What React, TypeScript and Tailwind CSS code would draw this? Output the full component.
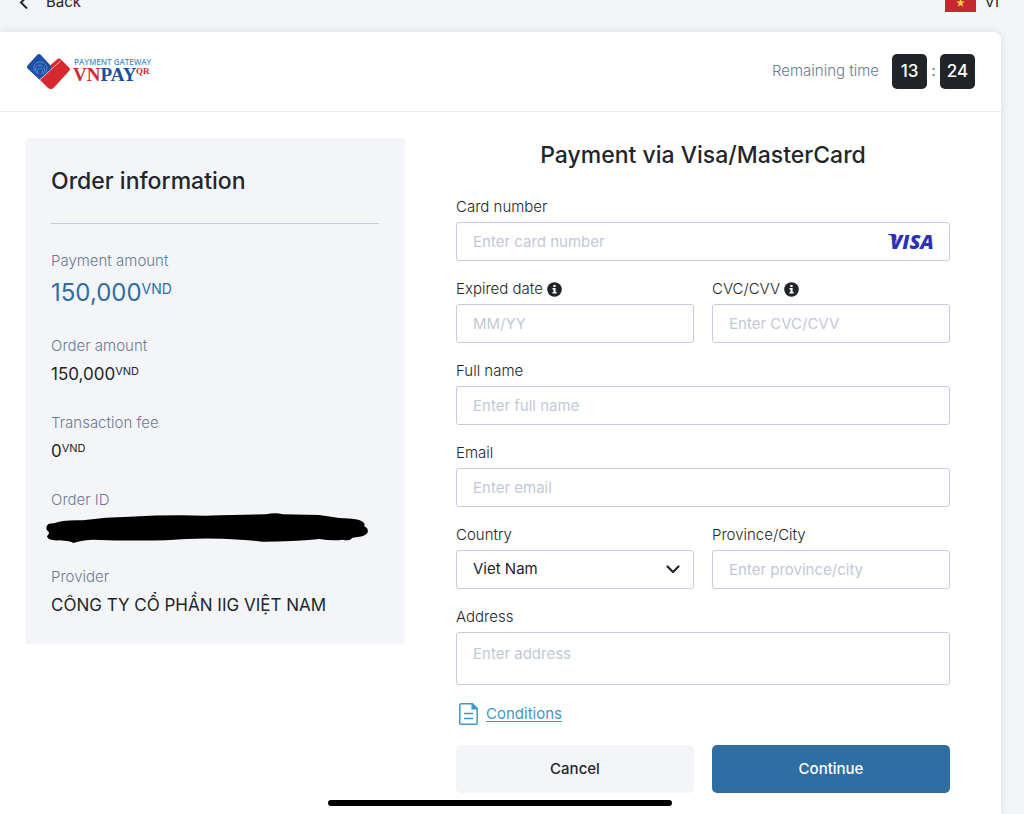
import { useState } from "react";

const inputClass =
  "h-[39px] w-full rounded-[3px] border border-[#c5ccda] bg-white px-4 text-[15px] text-[#22262b] outline-none placeholder:text-[#c1c9d6] focus:border-[#2f6ea3]";

export default function App() {
  return (
    <div className="flex min-h-screen flex-col overflow-hidden bg-[#f3f5f8] font-['Inter','Noto_Sans',sans-serif] text-[#22262b]">
      <TopBar />

      <main className="mr-[23px] flex-1 rounded-tr-lg bg-white shadow-[0_0_8px_rgba(60,72,100,0.14)]">
        <header className="flex h-20 items-center justify-between border-b border-[#e8eaef] px-[26px]">
          <Logo />
          <Countdown minutes="13" seconds="24" />
        </header>

        <div className="grid grid-cols-[10fr_13fr] items-start gap-[51px] pt-[26px] pr-[51px] pb-5 pl-[25px]">
          <OrderInfo />
          <CardForm />
        </div>
      </main>

      <div className="fixed bottom-2 left-[32%] h-[6px] w-[344px] rounded-full bg-black" />
    </div>
  );
}

function TopBar() {
  return (
    <nav className="-mt-2 flex h-10 items-start justify-between pr-[25px] pl-[18px] text-[15px] leading-5">
      <a href="#back" className="flex items-center gap-4">
        <svg viewBox="0 0 12 14" className="h-[14px] w-3" fill="none" stroke="currentColor" strokeWidth="2">
          <path d="M9 1.5 3 7.5l6 6" />
        </svg>
        Back
      </a>
      <button type="button" className="flex items-center gap-[9px]">
        <svg viewBox="0 0 31 20" className="h-5 w-[31px]">
          <path fill="#c5282f" d="M0 0h31v20H0z" />
          <path
            fill="#fbd44b"
            d="m15.500 6.500 1.100 3.100h3.300l-2.700 2 1 3.200-2.700-1.900-2.700 1.900 1-3.200-2.700-2h3.300z"
          />
        </svg>
        VI
      </button>
    </nav>
  );
}

function Logo() {
  return (
    <svg viewBox="0 0 126 38" className="h-[38px] w-[126px]" role="img" aria-label="VNPAY QR payment gateway">
      <path
        fill="#d8282f"
        d="M31 6.500q2-2 4 0l8.300 8.300q1.500 1.500 0 3L28 34.500q-3 3-6.500 0L13.500 26.500 23.500 13z"
      />
      <path
        fill="#1d4fa5"
        d="M11 2q2-1.800 4 0L24.500 12.500Q26 15.500 23.500 18L13.500 26.800 1.500 15.500q-1.500-1.500 0-3z"
      />
      <g fill="none" stroke="#6fa5dc" strokeWidth="0.700">
        <path d="M8.500 18c-2.500-6.500 2.500-10.500 8-8.500 5 2 5.500 6.500 3 10" />
        <path d="M10.500 20c-3-6 1.500-9 5-7.500 3.500 1.500 4 5 1.500 8.500" />
        <path d="M12.500 21.500c-2-4-.500-7 2-6.500 2.500.500 2.500 3.500.500 6.500" />
      </g>
      <path d="M13.500 27 35 7.500" stroke="#fff" strokeWidth="0.900" strokeDasharray="2 0.600" />
      <text x="48" y="12" fill="#4a94cf" fontSize="8" fontWeight="600" fontFamily="Open Sans, sans-serif">
        PAYMENT GATEWAY
      </text>
      <text x="47" y="28" fontSize="19" fontWeight="700" fontFamily="Liberation Serif, serif">
        <tspan fill="#d8282f">VN</tspan>
        <tspan fill="#1c4f9c">PAY</tspan>
      </text>
      <text x="110" y="21" fill="#d8282f" fontSize="9" fontWeight="700" fontFamily="Liberation Serif, serif">
        QR
      </text>
    </svg>
  );
}

function Countdown({ minutes, seconds }: { minutes: string; seconds: string }) {
  return (
    <div className="flex items-center text-[15px] text-[#6b7b93]">
      <span className="mr-[13px] font-light">Remaining time</span>
      <TimeBox>{minutes}</TimeBox>
      <span className="w-[13px] text-center">:</span>
      <TimeBox>{seconds}</TimeBox>
    </div>
  );
}

function TimeBox({ children }: { children: React.ReactNode }) {
  return (
    <span className="flex size-[35px] items-center justify-center rounded-[5px] bg-[#212429] text-[17px] font-medium text-white">
      {children}
    </span>
  );
}

function OrderInfo() {
  return (
    <section className="rounded bg-[#f3f5f8] px-[26px] py-[27px]">
      <h2 className="border-b border-[#c5ccda] pb-[26px] text-[23px] leading-8 font-medium">Order information</h2>
      <dl className="mt-[27px] grid gap-[27px]">
        <InfoRow label="Payment amount">
          <span className="flex text-2xl leading-8 text-[#2f6ea3]">
            150,000<span className="text-sm leading-6">VND</span>
          </span>
        </InfoRow>
        <InfoRow label="Order amount">
          <span className="flex">
            150,000<span className="text-[11px] leading-[18px]">VND</span>
          </span>
        </InfoRow>
        <InfoRow label="Transaction fee">
          <span className="flex">
            0<span className="text-[11px] leading-[18px]">VND</span>
          </span>
        </InfoRow>
        <InfoRow label="Order ID">
          <Redacted />
        </InfoRow>
        <InfoRow label="Provider">CÔNG TY CỔ PHẦN IIG VIỆT NAM</InfoRow>
      </dl>
    </section>
  );
}

function InfoRow({ label, children }: { label: string; children: React.ReactNode }) {
  return (
    <div>
      <dt className="text-[15px] leading-5 font-light text-[#6b7b93]">{label}</dt>
      <dd className="mt-[6px] text-[17px] leading-6">{children}</dd>
    </div>
  );
}

function Redacted() {
  return (
    <div className="relative h-6">
      <svg viewBox="0 0 966 90" className="absolute -top-[3px] -left-[5px] h-[30px] w-[322px]" aria-hidden="true">
        <path d="M3 38Q8 30 24 31 50 20 110 22 180 12 250 11 370 5 480 8 580 5 660 4 690-2 710 4L820 6Q850 10 880 15 940 16 952 28 957 32 955 40 970 48 964 60 956 72 920 74 910 86 890 80 860 84 820 78 740 86 650 86 600 80 530 77 440 74 360 82 240 84 140 80 100 82 82 90 74 84 40 82 5 84 3 70 10 62 9 58-3 50 3 38Z" />
      </svg>
    </div>
  );
}

function CardForm() {
  const [country, setCountry] = useState("vn");

  return (
    <form className="grid gap-[18px]" onSubmit={(e) => e.preventDefault()}>
      <h1 className="mb-[7px] text-center text-[23px] leading-[34px] font-medium">Payment via Visa/MasterCard</h1>

      <Field id="card" label="Card number">
        <div className="relative">
          <input id="card" className={inputClass} placeholder="Enter card number" inputMode="numeric" />
          <VisaMark />
        </div>
      </Field>

      <div className="grid grid-cols-2 gap-[18px]">
        <Field id="expired" label="Expired date" info>
          <input id="expired" className={inputClass} placeholder="MM/YY" />
        </Field>
        <Field id="cvc" label="CVC/CVV" info>
          <input id="cvc" className={inputClass} placeholder="Enter CVC/CVV" />
        </Field>
      </div>

      <Field id="name" label="Full name">
        <input id="name" className={inputClass} placeholder="Enter full name" />
      </Field>

      <Field id="email" label="Email">
        <input id="email" type="email" className={inputClass} placeholder="Enter email" />
      </Field>

      <div className="grid grid-cols-2 gap-[18px]">
        <Field id="country" label="Country">
          <div className="relative">
            <select
              id="country"
              className={`${inputClass} appearance-none`}
              value={country}
              onChange={(e) => setCountry(e.target.value)}
            >
              <option value="vn">Viet Nam</option>
            </select>
            <svg
              viewBox="0 0 14 9"
              className="pointer-events-none absolute top-[15px] right-[14px] h-[9px] w-[14px]"
              fill="none"
              stroke="currentColor"
              strokeWidth="2.200"
              strokeLinecap="round"
              strokeLinejoin="round"
            >
              <path d="m1.500 1.500 5.500 5.500 5.500-5.500" />
            </svg>
          </div>
        </Field>
        <Field id="city" label="Province/City">
          <input id="city" className={inputClass} placeholder="Enter province/city" />
        </Field>
      </div>

      <Field id="address" label="Address">
        <textarea
          id="address"
          className="block h-[53px] w-full resize-none rounded-[3px] border border-[#c5ccda] bg-white px-4 py-[11px] text-[15px] leading-5 outline-none placeholder:text-[#c1c9d6] focus:border-[#2f6ea3]"
          placeholder="Enter address"
        />
      </Field>

      <a href="#conditions" className="flex items-center gap-2 justify-self-start pl-[3px] text-[15px] leading-[22px] text-[#3f98c6]">
        <svg viewBox="0 0 19 22" className="h-[22px] w-[19px]" fill="none" stroke="currentColor" strokeWidth="1.500">
          <path d="M2 .800h11.500L18.200 5.500V20q0 1.200-1.200 1.200H2Q.800 21.200.800 20V2Q.800.800 2 .800Z" />
          <path fill="currentColor" d="M13.200 1v4.700h4.800z" />
          <path d="M5 10.500h9M5 15.500h9" />
        </svg>
        <span className="underline underline-offset-2">Conditions</span>
      </a>

      <div className="grid grid-cols-2 gap-[18px] pt-[2px]">
        <button type="button" className="h-12 rounded-[5px] bg-[#f3f5f8] text-[15px] font-medium">
          Cancel
        </button>
        <button type="submit" className="h-12 rounded-[5px] bg-[#2f6ea3] text-[15px] font-medium text-white">
          Continue
        </button>
      </div>
    </form>
  );
}

function Field({
  id,
  label,
  info,
  children,
}: {
  id: string;
  label: string;
  info?: boolean;
  children: React.ReactNode;
}) {
  return (
    <div>
      <div className="mb-[5px] flex items-center gap-1 text-[15px] leading-5 font-light">
        <label htmlFor={id}>{label}</label>
        {info && <InfoIcon />}
      </div>
      {children}
    </div>
  );
}

function InfoIcon() {
  return (
    <svg viewBox="0 0 15 15" className="size-[15px]" aria-hidden="true">
      <circle cx="7.500" cy="7.500" r="7.300" fill="#212429" />
      <path fill="#fff" d="M6.400 3h2.200v2H6.400zM5.500 6.100h3.100v4h1v1.400H5.500v-1.400h1V7.500h-1z" />
    </svg>
  );
}

function VisaMark() {
  return (
    <svg viewBox="0 0 47 31" className="absolute top-1 right-[15px] h-[31px] w-[47px]" role="img" aria-label="Visa">
      <path fill="#2a33b8" d="M0 8h6.500q1.500 0 1.800 1.500L8.500 16Q5.500 10 0 8.600z" />
      <text
        x="2"
        y="23"
        fill="#2a33b8"
        fontSize="20"
        fontWeight="800"
        fontStyle="italic"
        fontFamily="Open Sans, sans-serif"
      >
        VISA
      </text>
    </svg>
  );
}
